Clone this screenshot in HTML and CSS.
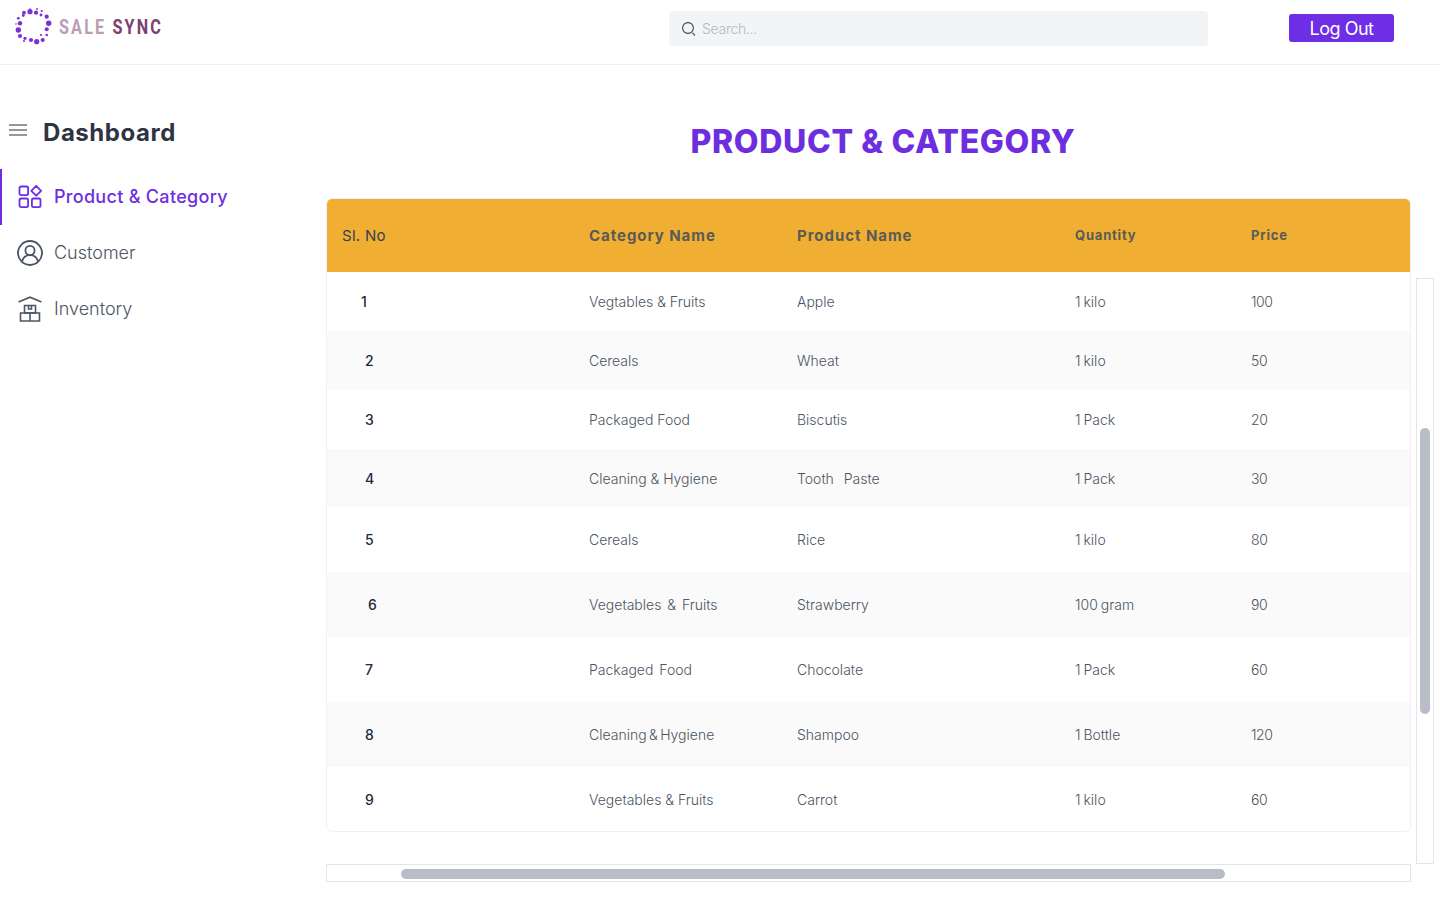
FILE: index.html
```html
<!DOCTYPE html>
<html lang="en">
<head>
    <meta charset="UTF-8">
    <meta name="viewport" content="width=device-width, initial-scale=1.0">
    <title>Sale Sync - Product & Category</title>
    <link rel="stylesheet" href="styles.css">
</head>
<body>
    <header class="topbar">
        <div class="logo">
            <svg class="logo-ring" viewBox="14 7 40 40" width="40" height="40" fill="#7b2fd6">
                <circle cx="30" cy="11.7" r="2.6"/><circle cx="36" cy="12.7" r="2.1"/><circle cx="24" cy="12.7" r="1.9"/>
                <circle cx="41.7" cy="11" r="1.1"/><circle cx="37" cy="9" r="0.9"/><circle cx="41" cy="15" r="1.4"/>
                <circle cx="46.7" cy="16.7" r="2.1"/><circle cx="48.7" cy="23.3" r="2.7"/><circle cx="46.7" cy="29.3" r="2"/>
                <circle cx="46.7" cy="35" r="1.3"/><circle cx="42.7" cy="40" r="2.1"/><circle cx="36.7" cy="41.7" r="2.6"/>
                <circle cx="31" cy="40" r="2.1"/><circle cx="25" cy="38.3" r="1.6"/><circle cx="20" cy="36" r="2.1"/>
                <circle cx="18.3" cy="30" r="2.7"/><circle cx="20" cy="23.3" r="2.2"/><circle cx="18.3" cy="18.3" r="1.4"/>
                <circle cx="23.3" cy="15.5" r="1.4"/><circle cx="24" cy="41" r="1"/><circle cx="41" cy="35" r="1.1"/>
                <circle cx="16" cy="24" r="0.8"/><circle cx="30" cy="9" r="0.8"/>
            </svg>
            <span class="logo-text"><span class="logo-sale">SALE</span> <span class="logo-sync">SYNC</span></span>
        </div>
        <div class="search">
            <svg class="search-icon" viewBox="0 0 16 16" width="16" height="16" fill="none" stroke="#374151" stroke-width="1.1" stroke-linecap="round">
                <circle cx="7" cy="7" r="5.4"/>
                <path d="M11.8 12.2l1.8 2"/>
            </svg>
            <span class="search-text">Search...</span>
        </div>
        <button class="logout" type="button">Log Out</button>
    </header>

    <div class="layout">
        <aside class="sidebar">
            <div class="sidebar-head">
                <svg class="burger" viewBox="0 0 18 12" width="18" height="12" stroke="#71757f" stroke-width="1.3">
                    <path d="M0 1h18M0 6h18M0 11h18"/>
                </svg>
                <h2 class="sidebar-title">Dashboard</h2>
            </div>
            <nav>
                <a class="nav-item active">
                    <svg viewBox="0 0 24 24" width="24" height="24" fill="none" stroke="#6d2ee0" stroke-width="1.8" stroke-linejoin="round">
                        <rect x="1.5" y="1.5" width="8.6" height="8.6" rx="1.6"/>
                        <rect x="1.5" y="13.5" width="8.6" height="8.6" rx="1.6"/>
                        <rect x="13.9" y="13.5" width="8.6" height="8.6" rx="1.6"/>
                        <path d="M18.2 .9l4.9 4.9-4.9 4.9-4.9-4.900z"/>
                    </svg>
                    <span>Product &amp; Category</span>
                </a>
                <a class="nav-item">
                    <svg viewBox="0 0 26 26" width="26" height="26" fill="none" stroke="#4b5563" stroke-width="1.8">
                        <circle cx="13" cy="13" r="12"/>
                        <circle cx="13" cy="10.5" r="4.6"/>
                        <path d="M5 21.5c1-4 4-6.4 8-6.4s7 2.4 8 6.4"/>
                    </svg>
                    <span>Customer</span>
                </a>
                <a class="nav-item nav-item-store">
                    <svg viewBox="0 0 24 26" width="24" height="26" fill="none" stroke="#4b5563" stroke-width="1.6">
                        <path d="M0.5 6L12 1.2 23.5 6"/>
                        <path d="M6.500 9.500h11v7.500h-11z"/>
                        <path d="M2.500 17h19v8h-19zM12 17v8M10.500 9.500v3.500h3V9.500"/>
                    </svg>
                    <span>Inventory</span>
                </a>
            </nav>
        </aside>

        <main class="content">
            <h1 class="page-title">PRODUCT &amp; CATEGORY</h1>
            <div class="table-area">
                <div class="table-card">
                    <table class="data-table">
                        <colgroup>
                            <col class="col-sl"><col class="col-cat"><col class="col-prod"><col class="col-qty"><col class="col-price">
                        </colgroup>
                        <thead>
                            <tr>
                                <th class="th-sl">Sl. No</th>
                                <th>Category Name</th>
                                <th>Product Name</th>
                                <th class="th-small">Quantity</th>
                                <th class="th-small">Price</th>
                            </tr>
                        </thead>
                        <tbody>
                            <tr><td class="num num-first">1</td><td>Vegtables &amp; Fruits</td><td>Apple</td><td>1 kilo</td><td>100</td></tr>
                            <tr><td class="num">2</td><td>Cereals</td><td>Wheat</td><td>1 kilo</td><td>50</td></tr>
                            <tr><td class="num">3</td><td>Packaged Food</td><td>Biscutis</td><td>1 Pack</td><td>20</td></tr>
                            <tr class="short"><td class="num">4</td><td>Cleaning &amp; Hygiene</td><td class="wider">Tooth Paste</td><td>1 Pack</td><td>30</td></tr>
                            <tr class="tall"><td class="num">5</td><td>Cereals</td><td>Rice</td><td>1 kilo</td><td>80</td></tr>
                            <tr class="tall"><td class="num num-six">6</td><td class="wide">Vegetables &amp; Fruits</td><td>Strawberry</td><td>100 gram</td><td>90</td></tr>
                            <tr class="tall"><td class="num">7</td><td class="wide">Packaged Food</td><td>Chocolate</td><td>1 Pack</td><td>60</td></tr>
                            <tr class="tall"><td class="num">8</td><td class="tight">Cleaning &amp; Hygiene</td><td>Shampoo</td><td>1 Bottle</td><td>120</td></tr>
                            <tr class="tall last"><td class="num">9</td><td>Vegetables &amp; Fruits</td><td>Carrot</td><td>1 kilo</td><td>60</td></tr>
                        </tbody>
                    </table>
                </div>
                <div class="vbar"><div class="vbar-thumb"></div></div>
                <div class="hbar"><div class="hbar-thumb"></div></div>
            </div>
        </main>
    </div>
</body>
</html>
```

FILE: styles.css
```css
* {
    box-sizing: border-box;
}

body {
    font-family: Inter, "Noto Sans", sans-serif;
    background-color: #fff;
    color: #4b5563;
    margin: 0;
    height: 900px;
    overflow: hidden;
}

/* top bar */
.topbar {
    display: flex;
    align-items: flex-start;
    height: 65px;
    border-bottom: 1px solid #f1f1f3;
}

.logo {
    display: flex;
    align-items: center;
    width: 669px;
    padding: 7px 0 0 14px;
}

.logo-ring {
    flex: none;
}

.logo-text {
    margin-left: 5px;
    margin-top: -1px;
    font-family: Roboto, sans-serif;
    font-size: 21px;
    font-weight: 700;
    letter-spacing: 2.8px;
    white-space: nowrap;
    transform: scaleX(0.77);
    transform-origin: left center;
}

.logo-sale {
    color: #bb9db5;
}

.logo-sync {
    color: #7d3f74;
}

.search {
    display: flex;
    align-items: center;
    gap: 5px;
    width: 539px;
    height: 35px;
    margin-top: 11px;
    padding-left: 12px;
    background-color: #f3f4f6;
    border-radius: 4px;
}

.search-text {
    margin-top: -1px;
    font-size: 14px;
    font-weight: 300;
    letter-spacing: -0.3px;
    color: #b4b8bf;
}

.logout {
    width: 105px;
    height: 28px;
    margin: 14px 0 0 81px;
    padding: 0;
    border: none;
    border-radius: 3px;
    background-color: #6d2ee6;
    color: #fff;
    font-family: Inter, sans-serif;
    font-size: 18px;
    letter-spacing: -0.5px;
}

/* page layout */
.layout {
    display: flex;
}

.sidebar {
    flex: none;
    width: 326px;
    padding-top: 52px;
}

.sidebar-head {
    display: flex;
    align-items: center;
    height: 30px;
    margin-bottom: 22px;
    padding-left: 9px;
}

.burger {
    margin-top: -4px;
}

.sidebar-title {
    margin: 0 0 0 16px;
    font-size: 24px;
    font-weight: 700;
    letter-spacing: 0.55px;
    color: #2f3342;
}

.nav-item {
    display: flex;
    align-items: center;
    gap: 11px;
    height: 56px;
    padding-left: 17px;
    padding-bottom: 1px;
    font-size: 18px;
    font-weight: 300;
    color: #4b5563;
}

.nav-item-store {
    padding-left: 18px;
    gap: 12px;
}

.nav-item.active {
    border-left: 2px solid #6d2ee6;
    padding-left: 16px;
    gap: 12px;
    color: #6d2ee0;
    font-weight: 500;
    letter-spacing: 0.3px;
}

.content {
    flex: 1;
    padding-top: 57px;
}

.page-title {
    margin: 0 0 36px;
    height: 40px;
    line-height: 40px;
    text-align: center;
    font-size: 32px;
    font-weight: 800;
    letter-spacing: 0.65px;
    color: #6d2ee0;
}

/* table + fake scrollbars */
.table-area {
    display: grid;
    grid-template-columns: 1085px 18px;
    column-gap: 5px;
    row-gap: 32px;
}

.table-card {
    border: 1px solid #f1f1f3;
    border-radius: 6px;
    overflow: hidden;
}

.data-table {
    width: 100%;
    table-layout: fixed;
    border-collapse: collapse;
    font-size: 14px;
    font-weight: 300;
}

.col-sl { width: 247px; }
.col-cat { width: 208px; }
.col-prod { width: 278px; }
.col-qty { width: 176px; }

.data-table th {
    height: 73px;
    padding: 0 0 1px 15px;
    text-align: left;
    background-color: #f0ae33;
    color: #5b5b55;
    font-size: 15px;
    font-weight: 700;
    letter-spacing: 0.95px;
}

.data-table .th-sl {
    padding-left: 15px;
    color: #374151;
    font-weight: 400;
    letter-spacing: 0.3px;
}

.data-table .th-small {
    font-size: 13px;
    letter-spacing: 0.8px;
}

.data-table td {
    height: 59px;
    padding: 0 0 0 15px;
}

.data-table tr.short td {
    height: 58px;
}

.data-table tr.tall td {
    height: 65px;
}

.data-table tr.last td {
    height: 64px;
}

.data-table tbody tr:nth-child(even) {
    background-color: #fafafa;
}

.data-table td:nth-child(4) {
    word-spacing: -1px;
}

.data-table td:nth-child(5) {
    letter-spacing: -0.4px;
}

.data-table td.wide {
    word-spacing: 2px;
}

.data-table td.wider {
    word-spacing: 6px;
}

.data-table td.tight {
    word-spacing: -1.5px;
}

.data-table .num {
    padding-left: 38px;
    color: #1f2937;
    font-weight: 500;
}

.data-table .num-first {
    padding-left: 34px;
}

.data-table .num-six {
    padding-left: 41px;
}

.vbar {
    margin-top: 80px;
    margin-bottom: -32px;
    padding: 149px 3px 0;
    border: 1px solid #e5e5e5;
}

.vbar-thumb {
    height: 286px;
    border-radius: 5px;
    background-color: #b8bdc7;
}

.hbar {
    grid-column: 1;
    height: 18px;
    padding: 4px 185px 0 74px;
    border: 1px solid #e5e5e5;
}

.hbar-thumb {
    height: 10px;
    border-radius: 5px;
    background-color: #b8bdc7;
}
```
